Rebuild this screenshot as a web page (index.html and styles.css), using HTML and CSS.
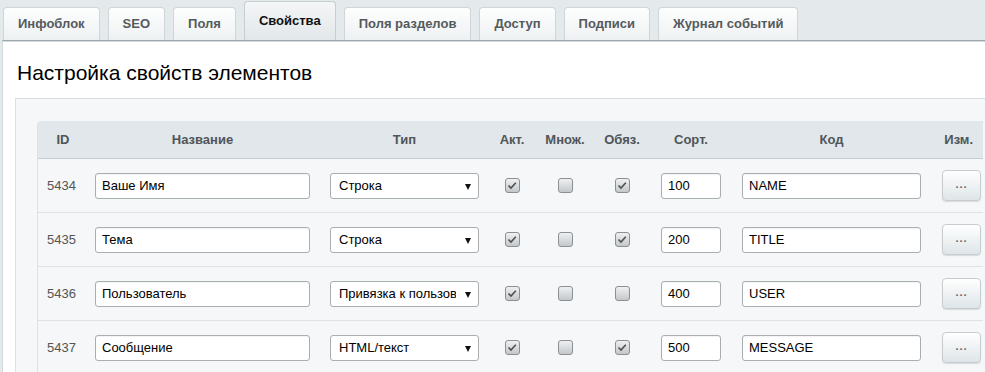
FILE: index.html
```html
<!DOCTYPE html>
<html lang="ru">
<head>
<meta charset="utf-8">
<title>Настройка свойств элементов</title>
<link rel="stylesheet" href="styles.css">
</head>
<body>
<div class="tabs">
  <div class="tab">Инфоблок</div>
  <div class="tab">SEO</div>
  <div class="tab">Поля</div>
  <div class="tab active">Свойства</div>
  <div class="tab">Поля разделов</div>
  <div class="tab">Доступ</div>
  <div class="tab">Подписи</div>
  <div class="tab">Журнал событий</div>
</div>
<div class="panel">
  <h1 class="title">Настройка свойств элементов</h1>
  <div class="box">
    <div class="table">
      <div class="row head">
        <div>ID</div>
        <div>Название</div>
        <div>Тип</div>
        <div>Акт.</div>
        <div>Множ.</div>
        <div>Обяз.</div>
        <div>Сорт.</div>
        <div>Код</div>
        <div class="h-edit">Изм.</div>
      </div>

      <div class="row">
        <div class="id">5434</div>
        <input class="txt name" type="text" value="Ваше Имя">
        <div class="sel"><select><option>Строка</option></select></div>
        <span class="cb on"><svg width="10" height="9" viewBox="0 0 10 9"><path d="M1.5 4.5 L4 7 L8.8 1.8" fill="none" stroke="#4d5154" stroke-width="1.6"/></svg></span>
        <span class="cb"></span>
        <span class="cb on"><svg width="10" height="9" viewBox="0 0 10 9"><path d="M1.5 4.5 L4 7 L8.8 1.8" fill="none" stroke="#4d5154" stroke-width="1.6"/></svg></span>
        <input class="txt sort" type="text" value="100">
        <input class="txt code" type="text" value="NAME">
        <button class="more">...</button>
      </div>

      <div class="row">
        <div class="id">5435</div>
        <input class="txt name" type="text" value="Тема">
        <div class="sel"><select><option>Строка</option></select></div>
        <span class="cb on"><svg width="10" height="9" viewBox="0 0 10 9"><path d="M1.5 4.5 L4 7 L8.8 1.8" fill="none" stroke="#4d5154" stroke-width="1.6"/></svg></span>
        <span class="cb"></span>
        <span class="cb on"><svg width="10" height="9" viewBox="0 0 10 9"><path d="M1.5 4.5 L4 7 L8.8 1.8" fill="none" stroke="#4d5154" stroke-width="1.6"/></svg></span>
        <input class="txt sort" type="text" value="200">
        <input class="txt code" type="text" value="TITLE">
        <button class="more">...</button>
      </div>

      <div class="row">
        <div class="id">5436</div>
        <input class="txt name" type="text" value="Пользователь">
        <div class="sel"><select><option>Привязка к пользователю</option></select></div>
        <span class="cb on"><svg width="10" height="9" viewBox="0 0 10 9"><path d="M1.5 4.5 L4 7 L8.8 1.8" fill="none" stroke="#4d5154" stroke-width="1.6"/></svg></span>
        <span class="cb"></span>
        <span class="cb"></span>
        <input class="txt sort" type="text" value="400">
        <input class="txt code" type="text" value="USER">
        <button class="more">...</button>
      </div>

      <div class="row">
        <div class="id">5437</div>
        <input class="txt name" type="text" value="Сообщение">
        <div class="sel"><select><option>HTML/текст</option></select></div>
        <span class="cb on"><svg width="10" height="9" viewBox="0 0 10 9"><path d="M1.5 4.5 L4 7 L8.8 1.8" fill="none" stroke="#4d5154" stroke-width="1.6"/></svg></span>
        <span class="cb"></span>
        <span class="cb on"><svg width="10" height="9" viewBox="0 0 10 9"><path d="M1.5 4.5 L4 7 L8.8 1.8" fill="none" stroke="#4d5154" stroke-width="1.6"/></svg></span>
        <input class="txt sort" type="text" value="500">
        <input class="txt code" type="text" value="MESSAGE">
        <button class="more">...</button>
      </div>
    </div>
  </div>
</div>
</body>
</html>
```
FILE: styles.css
```css
html, body {
  margin: 0;
  padding: 0;
}
body {
  background: #e4e9eb;
  font-family: "Liberation Sans", Arial, sans-serif;
  font-size: 13px;
  overflow: hidden;
}

.tabs {
  display: flex;
  align-items: flex-end;
  gap: 8px;
  height: 40px;
  padding-left: 3px;
  box-sizing: border-box;
}
.tab {
  height: 33px;
  box-sizing: border-box;
  padding: 0 14px;
  border: 1px solid #cfd6d9;
  border-bottom: none;
  border-radius: 4px 4px 0 0;
  background: linear-gradient(#fdfefe, #eef1f2);
  font-weight: bold;
  color: #555a5d;
  line-height: 32px;
  white-space: nowrap;
}
.tab.active {
  height: 39px;
  line-height: 38px;
  color: #111;
  background: linear-gradient(#f4f6f7, #e2e7e9);
  border-color: #c6ced2;
}

.panel {
  margin-left: 2px;
  background: #fff;
  border-top: 1px solid #9ea8ac;
  border-left: 1px solid #d3dadd;
  box-shadow: inset 0 1px 0 #d3d9dc;
  height: 400px;
}
.title {
  margin: 20px 0 13px 14px;
  font-size: 21px;
  line-height: 24px;
  font-weight: normal;
  color: #000;
}

.box {
  margin-left: 12px;
  border-left: 1px solid #dbe1e3;
  border-top: 1px solid #d6dde0;
  background: #f5f7f8;
  padding: 22px 2px 0 21px;
  height: 300px;
}
.table {
  border-left: 1px solid #dde3e5;
  border-radius: 4px 0 0 0;
}
.row {
  display: grid;
  grid-template-columns: 50px 229px 175px 40px 66px 48px 90px 191px 56px;
  align-items: center;
  justify-items: center;
  height: 53px;
  border-bottom: 1px solid #dde2e5;
}
.head {
  height: 37px;
  background: #e1e7ea;
  border-bottom: 1px solid #c3ccd0;
  border-radius: 4px 0 0 0;
  font-weight: bold;
  color: #4f5558;
}
.h-edit {
  justify-self: end;
  margin-right: 10px;
}
.id {
  justify-self: start;
  padding-left: 9px;
  color: #555;
}

.txt {
  box-sizing: border-box;
  height: 26px;
  margin: 0;
  border: 1px solid #a9aeb1;
  border-radius: 3px;
  padding: 0 6px;
  font: 13px "Liberation Sans", Arial, sans-serif;
  color: #000;
  background: #fff;
  box-shadow: inset 0 1px 1px rgba(0, 0, 0, 0.05);
  outline: none;
}
.name { width: 215px; }
.sort { width: 60px; }
.code { width: 179px; }

.sel {
  position: relative;
  width: 149px;
}
.sel select {
  appearance: none;
  -webkit-appearance: none;
  box-sizing: border-box;
  width: 100%;
  height: 26px;
  margin: 0;
  border: 1px solid #a9aeb1;
  border-radius: 3px;
  padding: 0 22px 0 8px;
  font: 13px "Liberation Sans", Arial, sans-serif;
  color: #000;
  background: #fff;
  outline: none;
}
.sel::after {
  content: "";
  position: absolute;
  right: 8px;
  top: 11px;
  border-left: 3px solid transparent;
  border-right: 3px solid transparent;
  border-top: 6px solid #111;
  pointer-events: none;
}

.cb {
  width: 15px;
  height: 15px;
  box-sizing: border-box;
  border: 1px solid #8b9094;
  border-radius: 3px;
  background: linear-gradient(#eef0f1, #c4c8cb);
  display: flex;
  align-items: center;
  justify-content: center;
}

.more {
  justify-self: end;
  margin-right: 2px;
  width: 39px;
  height: 31px;
  padding: 0 0 3px;
  border: 1px solid #c6cdd1;
  border-radius: 4px;
  background: linear-gradient(#ffffff, #dee5e8);
  box-shadow: 0 1px 1px rgba(0, 0, 0, 0.12);
  color: #5e6468;
  font: bold 11px "Liberation Sans", Arial, sans-serif;
  letter-spacing: 1px;
}
```
